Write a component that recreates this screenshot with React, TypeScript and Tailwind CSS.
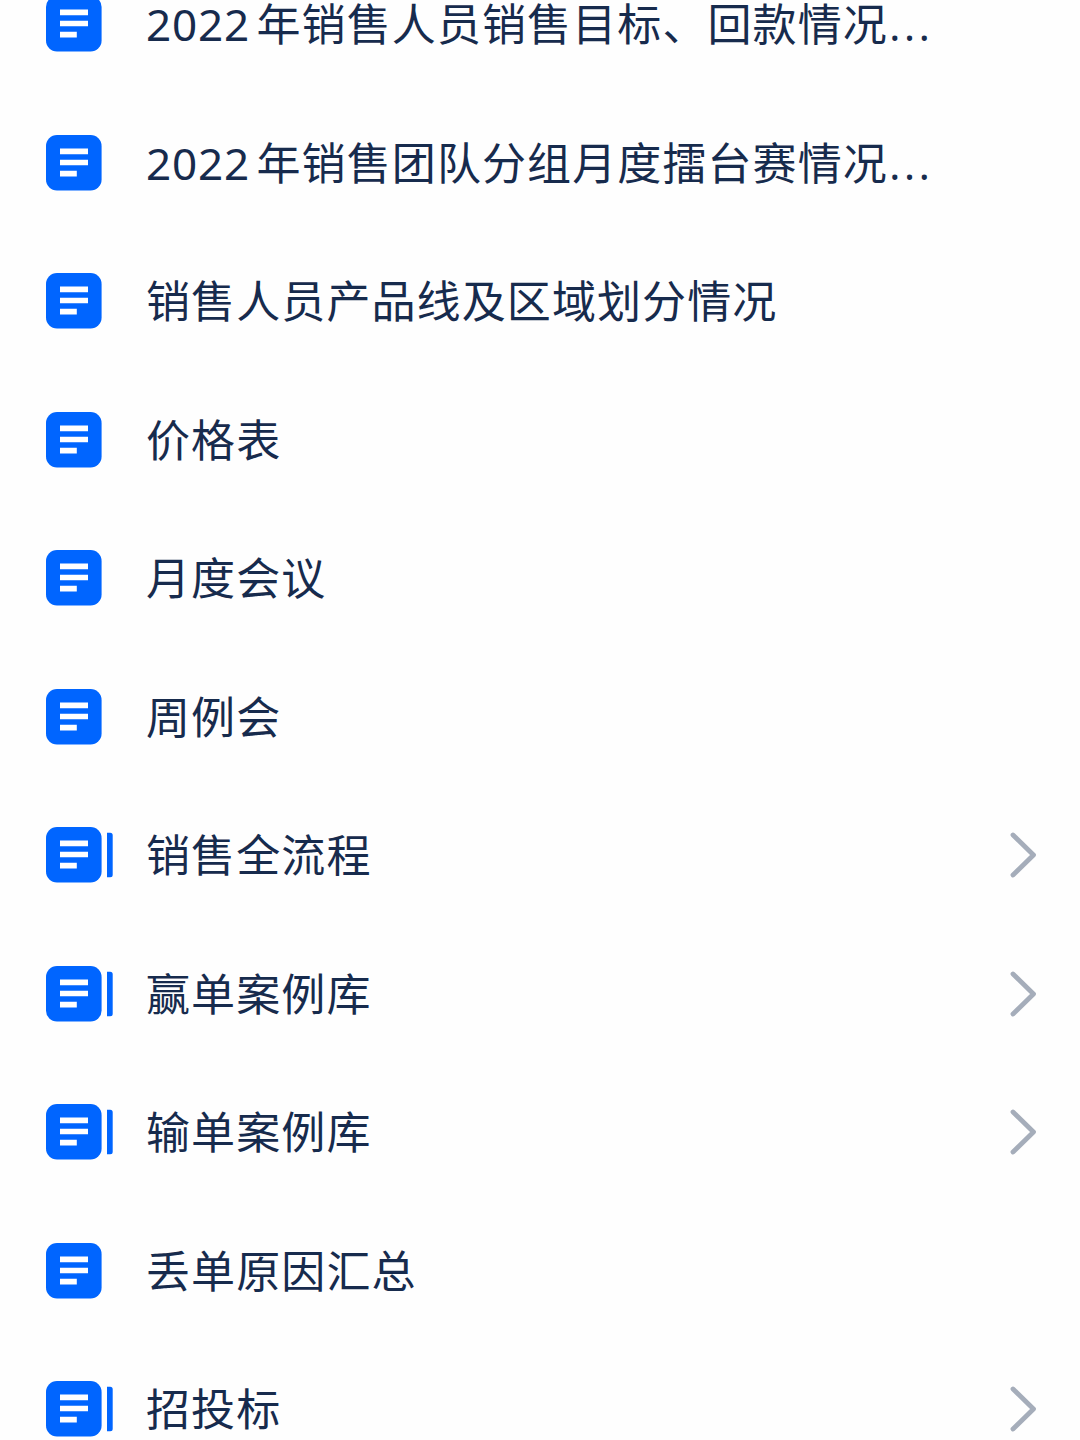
import React from "react";

type Doc = {
  title: string;
  year?: string; // leading number, set in its own latin run
  truncated?: boolean;
  hasChildren?: boolean; // shows the side bar on the icon and the chevron
};

const docs: Doc[] = [
  { year: "2022", title: "年销售人员销售目标、回款情况", truncated: true },
  { year: "2022", title: "年销售团队分组月度擂台赛情况", truncated: true },
  { title: "销售人员产品线及区域划分情况" },
  { title: "价格表" },
  { title: "月度会议" },
  { title: "周例会" },
  { title: "销售全流程", hasChildren: true },
  { title: "赢单案例库", hasChildren: true },
  { title: "输单案例库", hasChildren: true },
  { title: "丢单原因汇总" },
  { title: "招投标", hasChildren: true },
];

const DocIcon: React.FC<{ stacked?: boolean }> = ({ stacked }) => (
  <svg width="68" height="56" viewBox="0 0 68 56" className="shrink-0">
    <rect width="55.6" height="55.4" rx="11" fill="#0065ff" />
    <path d="M14 16.4h28M14 27.5h28M14 38.6h16.8" stroke="#fff" strokeWidth="5.7" />
    {stacked && <path d="M61 5.7h3.2a2.5 2.5 0 0 1 2.5 2.5v39.6a2.5 2.5 0 0 1-2.5 2.5H61z" fill="#0065ff" />}
  </svg>
);

const Chevron = () => (
  <svg width="28" height="46" viewBox="0 0 28 46" fill="none" className="shrink-0">
    <path d="M3 3l20.5 20L3 43" stroke="#a5adba" strokeWidth="4.8" strokeLinecap="round" strokeLinejoin="round" />
  </svg>
);

const DocList: React.FC = () => {
  return (
    <div className="h-[1440px] w-[1080px] overflow-hidden bg-[#fefefe] font-['Noto_Sans_CJK_SC',sans-serif]">
      <ul className="-mt-[45px]">
        {docs.map((doc, i) => (
          <li key={i} className="flex h-[138.5px] items-center pl-[46px] pr-[42px]">
            <DocIcon stacked={doc.hasChildren} />
            <div className="ml-[32px] flex h-[44px] flex-1 items-baseline whitespace-nowrap text-[44px] leading-[40px] tracking-[1.1px] text-[#172b4d]">
              {doc.year && (
                <span className="w-[110.5px] font-['Noto_Sans',sans-serif] leading-[20px] tracking-[0.8px]">
                  {doc.year}
                </span>
              )}
              <span>{doc.title}</span>
              {doc.truncated && (
                <span className="ml-[1px] font-['Open_Sans',sans-serif] leading-[20px] tracking-[3.2px]">...</span>
              )}
            </div>
            {doc.hasChildren && <Chevron />}
          </li>
        ))}
      </ul>
    </div>
  );
};

export default DocList;
